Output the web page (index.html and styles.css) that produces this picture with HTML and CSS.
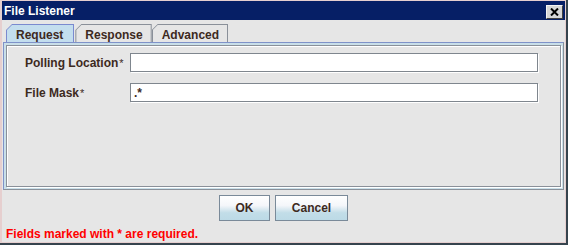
FILE: index.html
```html
<!DOCTYPE html>
<html lang="en">
<head>
    <meta charset="UTF-8">
    <title>File Listener</title>
    <link rel="stylesheet" href="styles.css">
</head>
<body>

    <div class="frame">
        <div class="window">
            <!-- Title Bar -->
            <div class="titlebar">
                <span class="title">File Listener</span>
                <button class="close-btn" title="Close">
                    <svg width="9" height="8" viewBox="0 0 9 8">
                        <path d="M1 0.5 L8 7.5 M8 0.5 L1 7.5" stroke="#000" stroke-width="2"/>
                    </svg>
                </button>
            </div>

            <div class="content">
                <!-- Tabs -->
                <div class="tabs">
                    <div class="tab selected"><span>Request</span></div>
                    <div class="tab"><span>Response</span></div>
                    <div class="tab"><span>Advanced</span></div>
                </div>

                <div class="tab-panel">
                    <div class="inner-box">
                        <div class="form-row">
                            <label>Polling Location<span class="req">*</span></label>
                            <input type="text" value="">
                        </div>
                        <div class="form-row">
                            <label>File Mask<span class="req">*</span></label>
                            <input type="text" value=".*">
                        </div>
                    </div>
                </div>

                <!-- Buttons -->
                <div class="buttons">
                    <button class="btn ok-btn">OK</button>
                    <button class="btn cancel-btn">Cancel</button>
                </div>

                <p class="required-note">Fields marked with * are required.</p>
            </div>
        </div>
    </div>

</body>
</html>
```

FILE: styles.css
```css
/* General */
body {
    margin: 0;
    font-family: 'Liberation Sans', Arial, sans-serif;
    font-size: 12px;
    font-weight: bold;
    color: #3d2a1e;
    background: #ffffff;
}

/* Window frame */
.frame {
    width: 568px;
    height: 245px;
    box-sizing: border-box;
    border-right: 2px solid #36444e;
    border-bottom: 2px solid #36444e;
}

.window {
    height: 100%;
    box-sizing: border-box;
    border: 1px solid #e6cfcf;
    border-left-width: 2px;
    background: #e6e6e6;
    display: flex;
    flex-direction: column;
}

.titlebar {
    height: 19px;
    background: #061f66;
    display: flex;
    align-items: center;
    justify-content: space-between;
    padding: 0 2px 0 2px;
}

.title {
    color: #ffffff;
    font-size: 12px;
    padding-top: 1px;
}

.close-btn {
    width: 17px;
    height: 14px;
    padding: 0;
    margin-top: 2px;
    background: #d6d6d6;
    border: 1px solid;
    border-color: #f4f4f4 #404040 #404040 #f4f4f4;
    display: flex;
    align-items: center;
    justify-content: center;
}

.content {
    flex: 1;
    display: flex;
    flex-direction: column;
    padding: 0 1px 0 1px;
}

/* Tabs */
.tabs {
    display: flex;
    margin-top: 4px;
    padding-left: 3px;
    height: 18px;
}

.tab {
    background: #8a9099;
    padding: 1px 1px 0 1px;
    clip-path: polygon(6px 0, 100% 0, 100% 100%, 0 100%, 0 6px);
}

.tab span {
    display: block;
    height: 100%;
    box-sizing: border-box;
    padding: 3px 8px 0 9px;
    background: #e6e6e6;
    clip-path: polygon(5px 0, 100% 0, 100% 100%, 0 100%, 0 5px);
}

.tab.selected {
    background: #7a8acf;
    margin-right: 1px;
}

.tab.selected span {
    padding: 3px 10px 0 9px;
    background: #c3deee;
}

/* Tab panel */
.tab-panel {
    height: 148px;
    box-sizing: border-box;
    border: 1px solid #7f92c9;
    border-right-color: #8a9099;
    border-bottom-color: #8a9099;
    padding: 2px 2px 2px 2px;
    background: #c9dfe9;
}

.inner-box {
    height: 100%;
    box-sizing: border-box;
    background: #e6e6e6;
    border: 1px solid #8a9099;
    box-shadow: inset 1px 1px 0 #ffffff, 1px 1px 0 #ffffff;
    padding: 7px 18px 0 18px;
}

.form-row {
    display: flex;
    align-items: center;
    margin-bottom: 11px;
}

.form-row label {
    width: 105px;
    font-size: 12px;
}

.form-row .req {
    font-size: 11px;
    font-weight: normal;
    margin-left: 1px;
}

input {
    width: 408px;
    height: 19px;
    box-sizing: border-box;
    border: 1px solid #7f868e;
    box-shadow: 1px 1px 0 #ffffff;
    background: #ffffff;
    font-family: 'Liberation Sans', Arial, sans-serif;
    font-size: 12px;
    font-weight: bold;
    color: #3d2a1e;
    padding: 0 3px;
}

/* Buttons */
.buttons {
    display: flex;
    justify-content: center;
    gap: 5px;
    margin-top: 5px;
}

.btn {
    height: 26px;
    border: 1px solid #7a8a99;
    background: linear-gradient(#ffffff 0%, #f4f6fa 40%, #c2dde8 70%, #bcdae6 100%);
    font-family: 'Liberation Sans', Arial, sans-serif;
    font-size: 12px;
    font-weight: bold;
    color: #3d2a1e;
    padding: 0;
}

.ok-btn {
    width: 51px;
}

.cancel-btn {
    width: 73px;
}

.required-note {
    margin: 6px 0 0 3px;
    line-height: 15px;
    color: #ff0000;
    font-size: 12px;
}
```
